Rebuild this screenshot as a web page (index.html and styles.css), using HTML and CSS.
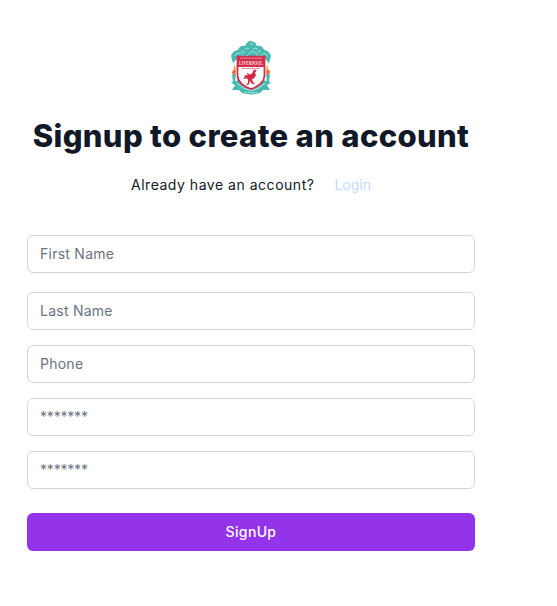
FILE: index.html
```html
<!DOCTYPE html>
<html lang="en">
<head>
<meta charset="utf-8">
<title>Signup</title>
<link rel="stylesheet" href="styles.css">
</head>
<body>
<main class="signup">
  <header class="header">
    <svg class="crest" viewBox="0 0 42 56" preserveAspectRatio="none" aria-hidden="true">
      <g fill="#47b9b0">
        <path d="M1 16Q3 11 8 10Q10 5 15 6Q17 1 21 1Q25 1 27 6Q32 5 34 10Q39 11 41 16L39 24Q36 19 33 18H9Q6 19 3 24Z"/>
        <path d="M1 43L8 41L13 47L21 50L29 47L34 41L41 43L37 46L40 51L33 51L30 54Q21 57 12 54L9 51L2 51L5 46Z"/>
        <path d="M2 34h4l-1 9H3zM36 34h4l-1 9h-2z"/>
      </g>
      <g fill="none" stroke="#c4ebe6" stroke-width=".8">
        <path d="M15 10Q17 7 19 9M23 9Q26 7 28 10M20 4h3M5 16Q9 11 12 15T19 14T26 14T32 15T38 17M11 11l4 2M31 11l-4 2"/>
      </g>
      <path fill="#fff" stroke="#d32e4c" stroke-width="1.8" d="M7.5 17H34.5V36Q34.5 45 21 50Q7.5 45 7.5 36Z"/>
      <path fill="#d32e4c" d="M7.5 17H34.5V27.5H7.5Z"/>
      <path d="M10 18.5h22" stroke="#ed9aab" stroke-width=".8"/>
      <text class="crest-name" x="21" y="25.2" textLength="24" lengthAdjust="spacingAndGlyphs">LIVERPOOL</text>
      <path d="M12 29h18" stroke="#dc7187" stroke-width="1.2" stroke-dasharray="2 .5"/>
      <path fill="#cf2944" d="M24 30l3 1-2 2 1 3-2 3-2 1 1 3 2 1-1 1-3-1-1-3-1 4-2 1-1-1 2-1 0-4-2-1-3 1 2-3-1-1 4 0-2-3 4 2 2-1z"/>
      <path fill="#f2ad62" d="M4 25q3 4 2 7l-1 3H3q-2-3 1-6zM38 25q-3 4-2 7l1 3h2q2-3-1-6z"/>
      <path fill="#df6845" d="M4 30l2 2-2 3-2-2zM38 30l2 2-2 3-2-2z"/>
      <path d="M7 44Q13 50.5 21 51.5Q29 50.5 35 44" fill="none" stroke="#d5f0ed" stroke-width=".8"/>
      <path d="M15 53.5h12" stroke="#c4ebe6" stroke-width="1" stroke-dasharray="2 .7"/>
    </svg>
    <h1 class="title">Signup to create an account</h1>
    <p class="account"><span class="question">Already have an account?</span><a class="login" href="#">Login</a></p>
  </header>
  <form class="form">
    <input class="field field-first" type="text" placeholder="First Name" aria-label="First Name">
    <input class="field" type="text" placeholder="Last Name" aria-label="Last Name">
    <input class="field" type="tel" placeholder="Phone" aria-label="Phone">
    <input class="field field-password" type="password" placeholder="*******" aria-label="Password">
    <input class="field field-password" type="password" placeholder="*******" aria-label="Confirm password">
    <button class="submit" type="button">SignUp</button>
  </form>
</main>
</body>
</html>
```
FILE: styles.css
```css
* { box-sizing: border-box; }
body {
  margin: 0;
  background: #fff;
  color: #111827;
  font-family: Inter, sans-serif;
}
.signup { width: 448px; margin: 40px 0 0 27px; }
.header { display: flex; flex-direction: column; align-items: center; }
.crest { display: block; width: 42px; height: 55px; overflow: visible; }
.crest-name {
  font: bold 6.5px "Liberation Serif", serif;
  fill: #f9d6dd;
  text-anchor: middle;
}
.title {
  margin: 23px 0 0;
  font-size: 31px;
  font-weight: 800;
  line-height: 36px;
  letter-spacing: 0.33px;
  white-space: nowrap;
}
.account {
  display: flex;
  gap: 20px;
  margin: 21px 0 0;
  font-size: 14px;
  line-height: 20px;
  white-space: nowrap;
}
.question { letter-spacing: 0.52px; }
.login { color: #bfdbfe; text-decoration: none; }
.form { display: flex; flex-direction: column; gap: 15px; margin-top: 40px; }
.field {
  width: 100%;
  height: 38px;
  padding: 7px 12px 9px;
  border: 1px solid #d1d5db;
  border-radius: 6px;
  background: #fff;
  font: 14px/20px Inter, sans-serif;
  letter-spacing: 0.25px;
}
.field::placeholder { color: #6b7280; opacity: 1; }
.field-first { margin-bottom: 4px; }
.field-password { letter-spacing: -0.2px; }
.submit {
  height: 38px;
  margin-top: 9px;
  border: 0;
  border-radius: 6px;
  background: #9333ea;
  color: #fff;
  font: 500 14px/20px Inter, sans-serif;
  letter-spacing: 0.35px;
}
```
